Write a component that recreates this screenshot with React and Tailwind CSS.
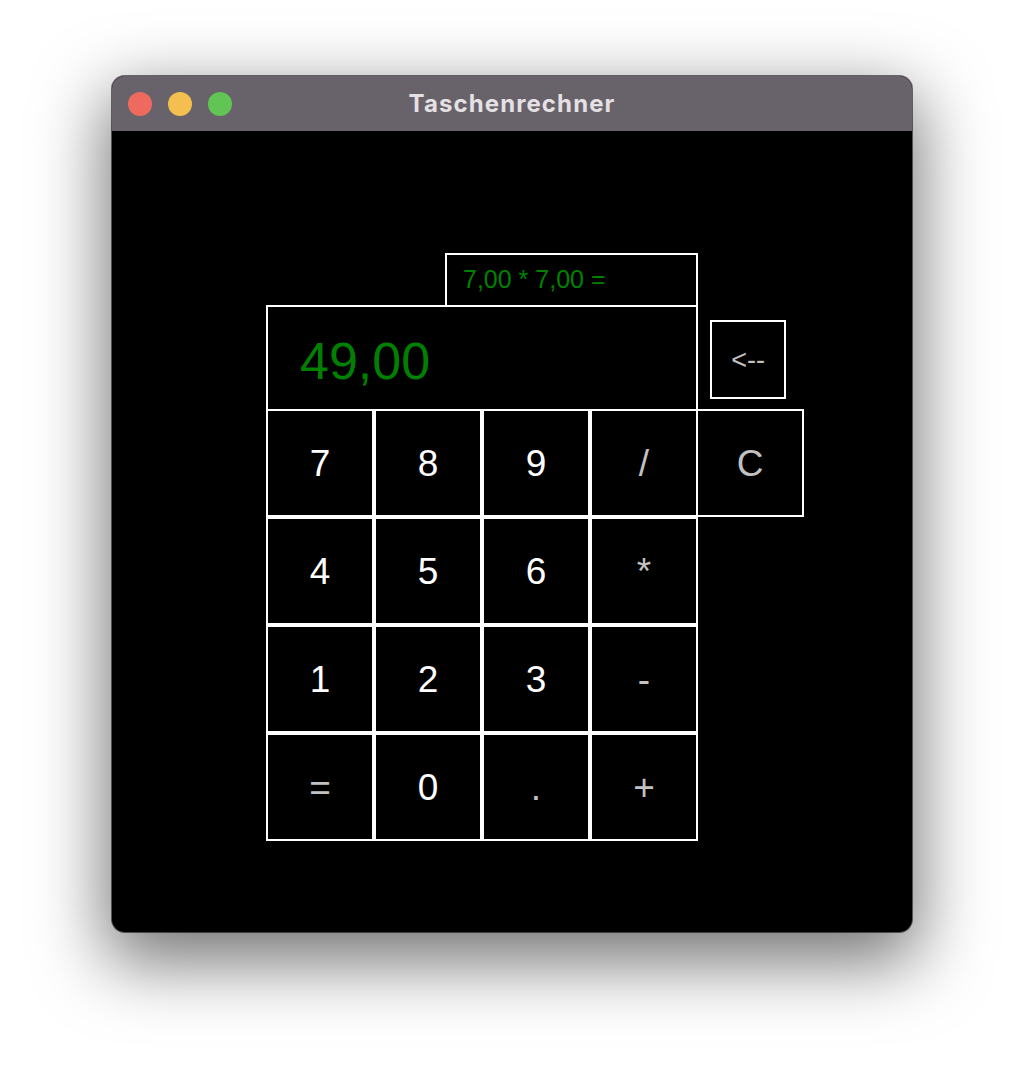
const digitFont = { fontFamily: '"Liberation Sans", Arial, sans-serif' };

const Key = ({ label, op, className = '' }) => (
  <div
    className={`flex h-[108px] w-[108px] shrink-0 items-center justify-center border-2 border-white bg-black pt-[2px] text-[37px] ${
      op ? 'text-[#c2c2c2]' : 'text-white'
    } ${className}`}
  >
    {label}
  </div>
);

const rows = [
  [
    ['4', false],
    ['5', false],
    ['6', false],
    ['*', true],
  ],
  [
    ['1', false],
    ['2', false],
    ['3', false],
    ['-', true],
  ],
  [
    ['=', true],
    ['0', false],
    ['.', true],
    ['+', true],
  ],
];

export default function App() {
  return (
    <div className="flex h-[1080px] w-full justify-center bg-white pt-[76px]">
      <div className="flex h-[856px] w-[800px] flex-col overflow-hidden rounded-[13px] bg-black shadow-[0_0_0_1px_rgba(0,0,0,0.55),0_24px_70px_6px_rgba(0,0,0,0.55)]">
        {/* title bar */}
        <div className="grid h-[55px] shrink-0 grid-cols-[1fr_auto_1fr] items-center bg-[#68636a] px-[16px]">
          <div className="flex items-center gap-[16px]">
            <span className="h-[24px] w-[24px] rounded-full bg-[#ee6a5f]" />
            <span className="h-[24px] w-[24px] rounded-full bg-[#f5bf4f]" />
            <span className="h-[24px] w-[24px] rounded-full bg-[#61c454]" />
          </div>
          <div
            className="text-[24px] font-bold tracking-[1.1px] text-[#e4e0e4]"
            style={{ fontFamily: 'Inter, "Liberation Sans", sans-serif' }}
          >
            Taschenrechner
          </div>
          <div />
        </div>

        {/* calculator */}
        <div className="flex-1 pl-[154px] pt-[122px]" style={digitFont}>
          <div className="flex flex-col">
            <div className="ml-[179px] flex h-[54px] w-[253px] items-center border-2 border-white pl-[16px] text-[25px] text-[#008000]">
              7,00 * 7,00 =
            </div>

            <div className="-mt-[2px] flex items-start">
              <div className="flex h-[106px] w-[432px] items-center border-2 border-white pl-[32px] pt-[6px] text-[52px] text-[#008000]">
                49,00
              </div>
              <div className="ml-[12px] mt-[15px] flex h-[79px] w-[76px] items-center justify-center border-2 border-white pt-[2px] text-[27px] text-[#c2c2c2]">
                &lt;--
              </div>
            </div>

            <div className="-mt-[2px] flex">
              <Key label="7" />
              <Key label="8" />
              <Key label="9" />
              <Key label="/" op />
              <Key label="C" op className="-ml-[2px] w-[106px]" />
            </div>

            {rows.map((row, i) => (
              <div key={i} className="flex">
                {row.map(([label, op]) => (
                  <Key key={label} label={label} op={op} />
                ))}
              </div>
            ))}
          </div>
        </div>
      </div>
    </div>
  );
}
